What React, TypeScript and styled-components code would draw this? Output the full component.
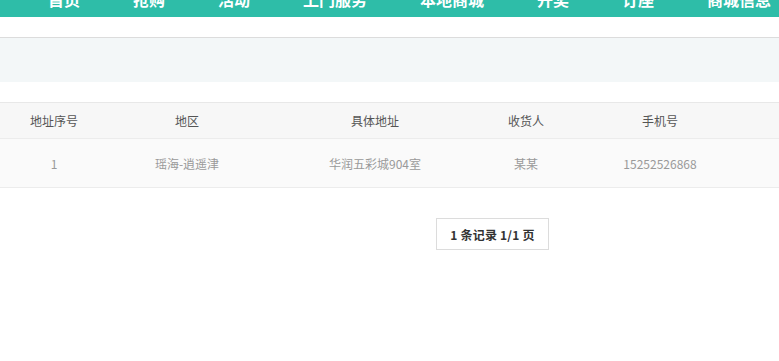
import React from "react";
import styled, { createGlobalStyle } from "styled-components";

const GlobalStyle = createGlobalStyle`
  html, body {
    margin: 0;
    padding: 0;
    background: #fff;
    font-family: "Microsoft YaHei", "Noto Sans CJK SC", "Noto Sans", sans-serif;
  }
`

const Nav = styled.div`
  height: 17px;
  background-color: #2ebda8;
  overflow: hidden;
  display: flex;
  gap: 53px;
  padding-left: 48px;
`
const NavItem = styled.a`
  display: block;
  margin-top: -9px;
  font-size: 16px;
  line-height: 16px;
  font-weight: bold;
  color: #fff;
  white-space: nowrap;
  text-decoration: none;
`

const Spacer = styled.div`
  height: 20px;
  border-bottom: 1px solid #dcdcdc;
`
const Banner = styled.div`
  height: 44px;
  background-color: #f3f7f8;
  margin-bottom: 20px;
`

const Table = styled.div`
  border-top: 1px solid #e8e8e8;
`
const Row = styled.div<{ head?: boolean }>`
  display: grid;
  grid-template-columns: 108px 158px 218px 84px 184px 1fr;
  align-items: center;
  height: ${p => (p.head ? "35px" : "48px")};
  background-color: ${p => (p.head ? "#f7f7f7" : "#fafafa")};
  border-bottom: 1px solid #ececec;
  font-size: 12px;
  color: ${p => (p.head ? "#555" : "#999")};
`
const Cell = styled.div`
  text-align: center;
  white-space: nowrap;
`

const Pager = styled.div`
  display: flex;
  padding: 30px 0 0 436px;
`
const PageInfo = styled.div`
  width: 111px;
  height: 30px;
  border: 1px solid #dcdcdc;
  display: flex;
  align-items: center;
  justify-content: center;
  font-size: 12px;
  font-weight: bold;
  letter-spacing: 0.2px;
  color: #333;
`

const navs = ["首页", "抢购", "活动", "上门服务", "本地商城", "开奖", "订座", "商城信息"];
const heads = ["地址序号", "地区", "具体地址", "收货人", "手机号", ""];
const rows = [["1", "瑶海-逍遥津", "华润五彩城904室", "某某", "15252526868", ""]];

export default function App() {
  return (
    <>
      <GlobalStyle />
      <Nav>
        {navs.map(n => (
          <NavItem key={n}>{n}</NavItem>
        ))}
      </Nav>
      <Spacer />
      <Banner />
      <Table>
        <Row head>
          {heads.map((h, i) => (
            <Cell key={i}>{h}</Cell>
          ))}
        </Row>
        {rows.map((r, i) => (
          <Row key={i}>
            {r.map((c, j) => (
              <Cell key={j}>{c}</Cell>
            ))}
          </Row>
        ))}
      </Table>
      <Pager>
        <PageInfo>1 条记录 1/1 页</PageInfo>
      </Pager>
    </>
  );
}
